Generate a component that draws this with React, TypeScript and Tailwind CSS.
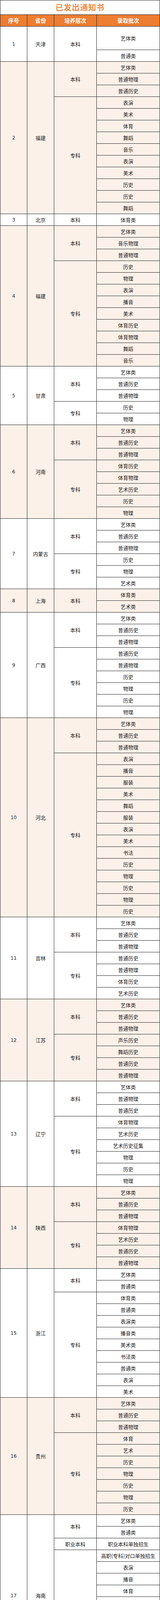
import React from "react";

const ROW = 30;

type Province = {
  no: string;
  name: string;
  levels: [string, number][];
  cats: string;
};

// cats: space separated, "name:rows" when a cell spans more than one row
const provinces: Province[] = [
  { no: "1", name: "天津", levels: [["本科", 3]], cats: "艺体类:2 普通类" },
  { no: "2", name: "福建", levels: [["本科", 3], ["专科", 10]], cats: "艺体类 普通物理 普通历史 表演 美术 体育 舞蹈 音乐 表演 美术 历史 历史 舞蹈" },
  { no: "3", name: "北京", levels: [["本科", 1]], cats: "体育类" },
  { no: "4", name: "福建", levels: [["本科", 3], ["专科", 9]], cats: "艺体类 音乐物理 普通物理 历史 物理 表演 播音 美术 体育历史 体育物理 舞蹈 音乐" },
  { no: "5", name: "甘肃", levels: [["本科", 3], ["专科", 2]], cats: "艺体类 普通历史 普通物理 历史 物理" },
  { no: "6", name: "河南", levels: [["本科", 3], ["专科", 5]], cats: "艺体类 普通历史 普通物理 体育历史 体育物理 艺术历史 历史 物理" },
  { no: "7", name: "内蒙古", levels: [["本科", 3], ["专科", 3]], cats: "艺体类 普通历史 普通物理 历史 物理 艺术类" },
  { no: "8", name: "上海", levels: [["本科", 2]], cats: "体育类 艺术类" },
  { no: "9", name: "广西", levels: [["本科", 3], ["专科", 6]], cats: "艺体类 普通历史 普通物理 普通历史 普通物理 历史 物理 历史 物理" },
  { no: "10", name: "河北", levels: [["本科", 3], ["专科", 14]], cats: "艺体类 普通历史 普通物理 表演 播音 服装 美术 舞蹈 服装 表演 美术 书法 历史 物理 历史 物理 历史" },
  { no: "11", name: "吉林", levels: [["本科", 3], ["专科", 4]], cats: "艺体类 普通历史 普通物理 普通历史 普通物理 体育历史 艺术历史" },
  { no: "12", name: "江苏", levels: [["本科", 3], ["专科", 4]], cats: "艺体类 普通历史 普通物理 声乐历史 舞蹈历史 普通历史 普通物理" },
  { no: "13", name: "辽宁", levels: [["本科", 3], ["专科", 6]], cats: "艺体类 普通物理 普通历史 体育物理 艺术历史 艺术历史征集 物理 历史 物理" },
  { no: "14", name: "陕西", levels: [["本科", 3], ["专科", 4]], cats: "艺体类 普通历史 普通物理 体育物理 艺术历史 普通历史 普通物理" },
  { no: "15", name: "浙江", levels: [["本科", 2], ["专科", 9]], cats: "艺体类 普通类 体育类 普通类 表演类 播音类 美术类 书法类 普通类 表演 美术" },
  { no: "16", name: "贵州", levels: [["本科", 3], ["专科", 7]], cats: "艺体类 普通历史 普通物理 体育 艺术 历史 物理 历史 物理 历史" },
  {
    no: "17",
    name: "海南",
    levels: [["本科", 2], ["职业本科", 1], ["专科", 9], ["高职与本科(3+2)", 1.8]],
    cats: "艺体类 普通类 职业本科单独招生 高职(专科)对口单独招生 表演 播音 体育 书法 器乐 美术 舞蹈 普通类:2.8",
  },
  { no: "18", name: "湖北", levels: [["本科", 3], ["专科", 5]], cats: "艺体类 普通物理 普通历史 体育类 艺术 历史 物理 物理" },
  { no: "19", name: "宁夏", levels: [["本科", 3], ["专科", 4]], cats: "普通历史 普通物理 艺体类 体育历史 体育物理 历史 物理" },
  { no: "20", name: "青海", levels: [["本科", 3], ["专科", 2]], cats: "艺体类 普通文史 普通物理 历史 物理" },
  { no: "21", name: "新疆", levels: [["本科", 5], ["专科", 4]], cats: "艺体类 理工 文史 南疆单列 理工 舞蹈 体育 理工 文史" },
  { no: "22", name: "重庆", levels: [["本科", 3], ["专科", 5]], cats: "艺体类 普通历史 普通物理 体育 艺术 历史 物理 历史" },
  { no: "23", name: "广东", levels: [["本科", 4], ["专科", 1]], cats: "艺体类 普通历史 普通物理 物理 舞蹈" },
  { no: "24", name: "河南", levels: [["本科", 3], ["专科", 1]], cats: "艺体类 普通历史 普通物理 历史" },
  { no: "25", name: "黑龙江", levels: [["本科", 3], ["专科", 8]], cats: "艺体类 历史 物理 美术 体育历史 体育物理 舞蹈 历史 物理 历史 物理" },
  { no: "26", name: "山东", levels: [["本科", 2], ["专科", 3]], cats: "艺体类 普通类 普通类 体育类 艺术类" },
  { no: "27", name: "四川", levels: [["本科", 5], ["专科", 6]], cats: "艺体类 普通历史 普通物理 历史 物理 体育 艺术 历史 物理 体育 物理" },
  { no: "28", name: "云南", levels: [["本科", 3], ["专科", 2]], cats: "艺体类 普通历史 普通物理 历史 物理" },
  { no: "29", name: "湖南", levels: [["本科", 3], ["专科", 9]], cats: "普通历史 普通物理 艺体类 普通物理 空乘历史 空乘物理 历史 体育历史 体育物理 艺术 历史 物理" },
  { no: "30", name: "江西", levels: [["本科", 3], ["专科", 5]], cats: "艺体类 普通历史 普通物理 历史 体育 物理 历史 艺术" },
  { no: "31", name: "山西", levels: [["本科", 9], ["专科", 7]], cats: "艺体类 普通历史 普通物理 普通历史 普通物理 历史 物理 历史 物理 表演 播音 书法 体育 舞蹈 历史 物理" },
  { no: "32", name: "安徽", levels: [["专科", 6]], cats: "美术 历史 物理 历史 物理 历史" },
];

const cjk = { fontFamily: '"Noto Sans CJK SC", "Noto Sans", sans-serif' };
const digits = { fontFamily: '"DejaVu Sans", "Noto Sans CJK SC", sans-serif' };

function ProvinceRow({ p, shaded }: { p: Province; shaded: boolean }) {
  const cats = p.cats.split(" ").map((c) => {
    const [name, rows] = c.split(":");
    return { name, rows: rows ? parseFloat(rows) : 1 };
  });

  return (
    <div className={shaded ? "flex bg-[#fcf1e9]" : "flex bg-white"}>
      <div
        className="w-[70px] shrink-0 flex items-center justify-center border-l border-r border-b border-[#222] text-[12px] text-[#1a1a1a]"
        style={digits}
      >
        {p.no}
      </div>
      <div className="w-[69px] shrink-0 flex items-center justify-center border-r border-b border-[#222] text-[13px] text-[#1a1a1a]">
        {p.name}
      </div>
      <div className="w-[109px] shrink-0 flex flex-col">
        {p.levels.map(([name, rows], i) => (
          <div
            key={i}
            className="flex items-center justify-center whitespace-nowrap border-r border-b border-[#222] text-[13px] text-[#1a1a1a]"
            style={{ height: rows * ROW }}
          >
            {name}
          </div>
        ))}
      </div>
      <div className="flex-1 flex flex-col">
        {cats.map((c, i) => (
          <div
            key={i}
            className="flex items-center justify-center whitespace-nowrap border-r border-b border-[#222] text-[13px] text-[#1a1a1a]"
            style={{ height: c.rows * ROW }}
          >
            {c.name}
          </div>
        ))}
      </div>
    </div>
  );
}

export default function App() {
  return (
    <div className="w-[410px] relative bg-white" style={cjk}>
      <div className="h-[38px] flex items-center justify-center border border-[#222] text-[20px] font-bold text-[#ee8a45] tracking-[1px]">
        已发出通知书
      </div>

      <div className="flex h-[30px] bg-[#ed7d31] text-white text-[14px] font-bold">
        <div className="w-[70px] shrink-0 flex items-center justify-center border-l border-r border-b border-[#222]">序号</div>
        <div className="w-[69px] shrink-0 flex items-center justify-center border-r border-b border-[#222]">省份</div>
        <div className="w-[109px] shrink-0 flex items-center justify-center border-r border-b border-[#222]">培养层次</div>
        <div className="flex-1 flex items-center justify-center border-r border-b border-[#222]">录取批次</div>
      </div>

      {provinces.map((p, i) => (
        <ProvinceRow key={p.no} p={p} shaded={i % 2 === 1} />
      ))}

      <div className="flex h-[30px] bg-white text-[#1a1a1a]">
        <div
          className="w-[70px] shrink-0 flex items-center justify-center border-l border-r border-b border-[#222] text-[12px]"
          style={digits}
        >
          33
        </div>
        <div className="flex-1 flex items-center justify-center border-r border-b border-[#222] text-[13px]">专升本</div>
      </div>

      {/* watermark */}
      <div className="absolute top-[7876px] left-[272px] text-[22px] leading-none text-[#9a9a9a] opacity-60 pointer-events-none select-none">
        高考直通车
      </div>
    </div>
  );
}
